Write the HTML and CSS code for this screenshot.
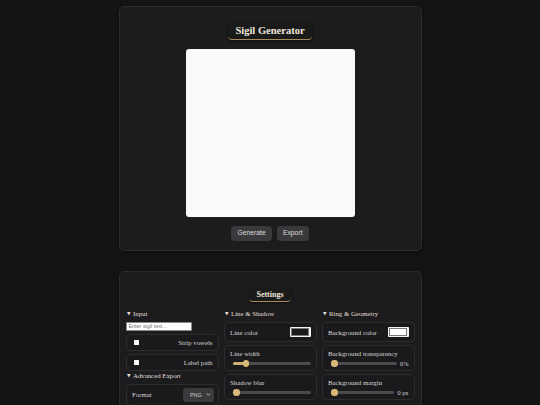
FILE: index.html
```html
<!DOCTYPE html>
<html lang="en">
<head>
<meta charset="utf-8">
<title>Sigil Generator</title>
<link rel="stylesheet" href="styles.css">
</head>
<body>
<main class="page">
  <section class="card gen">
    <h1 class="title">Sigil Generator</h1>
    <div class="canvas"></div>
    <div class="actions">
      <button class="btn">Generate</button>
      <button class="btn">Export</button>
    </div>
  </section>

  <section class="card settings">
    <h2 class="title small">Settings</h2>
    <div class="grid">
      <div class="col">
        <details open class="group">
          <summary>Input</summary>
          <div class="stack">
            <input class="text" type="text" placeholder="Enter sigil text...">
            <label class="row check"><input type="checkbox" class="cb"><span>Strip vowels</span></label>
            <label class="row check"><input type="checkbox" class="cb"><span>Label path</span></label>
          </div>
        </details>
        <details open class="group adv">
          <summary>Advanced Export</summary>
          <div class="stack">
            <div class="row inline fmt">
              <span>Format</span>
              <span class="select-wrap">
                <select class="select"><option>PNG</option><option>SVG</option></select>
                <svg class="chev" viewBox="0 0 10 10"><path d="M2 3.5 L5 6.5 L8 3.5" fill="none" stroke="#ddd" stroke-width="1.6" stroke-linecap="round" stroke-linejoin="round"/></svg>
              </span>
            </div>
          </div>
        </details>
      </div>

      <div class="col">
        <details open class="group">
          <summary>Line &amp; Shadow</summary>
          <div class="stack">
            <div class="row inline">
              <span>Line color</span>
              <span class="swatch"><span class="fill dark"></span></span>
            </div>
            <div class="row slider">
              <span class="lbl">Line width</span>
              <div class="srow"><input type="range" class="range" min="0" max="100" value="14" style="--fill:14%"></div>
            </div>
            <div class="row slider">
              <span class="lbl">Shadow blur</span>
              <div class="srow"><input type="range" class="range" min="0" max="100" value="0" style="--fill:0%"></div>
            </div>
          </div>
        </details>
      </div>

      <div class="col">
        <details open class="group">
          <summary>Ring &amp; Geometry</summary>
          <div class="stack">
            <div class="row inline">
              <span>Background color</span>
              <span class="swatch"><span class="fill light"></span></span>
            </div>
            <div class="row slider">
              <span class="lbl">Background transparency</span>
              <div class="srow"><input type="range" class="range" min="0" max="100" value="0" style="--fill:0%"><span class="val">0%</span></div>
            </div>
            <div class="row slider">
              <span class="lbl">Background margin</span>
              <div class="srow"><input type="range" class="range" min="0" max="100" value="0" style="--fill:0%"><span class="val">0 px</span></div>
            </div>
          </div>
        </details>
      </div>
    </div>
  </section>
</main>
</body>
</html>
```
FILE: styles.css
```css
html {
  scrollbar-width: none;
}
html::-webkit-scrollbar {
  display: none;
}
body {
  margin: 0;
  background: #141414;
  font-family: "Liberation Serif", "Times New Roman", serif;
  color: #d8d8d8;
}
.page {
  width: 303px;
  margin: 0 auto;
  padding: 6px 0 40px;
}
.card {
  background: #1c1c1e;
  border: 1px solid #2b2b2d;
  border-radius: 5px;
  box-shadow: 0 1px 4px rgba(0, 0, 0, 0.4);
  box-sizing: border-box;
  display: flex;
  flex-direction: column;
  align-items: center;
}
.gen {
  padding: 15.5px 0 9px;
}
.settings {
  margin-top: 20.5px;
  padding: 16px 6px 12px;
}
.title {
  margin: 0;
  font-size: 10.5px;
  line-height: 12px;
  font-weight: bold;
  color: #ece6da;
  padding: 2px 7px;
  background: #1a1a1a;
  border-bottom: 1px solid #a78b5c;
  border-radius: 4px;
  box-shadow: 0 1px 3px rgba(0, 0, 0, 0.55);
}
.title.small {
  font-size: 8px;
  line-height: 9px;
  padding: 2px 7px;
}
.canvas {
  margin-top: 9px;
  width: 169px;
  height: 168.5px;
  background: #f9f9f9;
  border-radius: 3px;
}
.actions {
  margin-top: 9px;
  display: flex;
  gap: 4.5px;
}
.btn {
  font-family: "Liberation Sans", Arial, sans-serif;
  font-size: 6.8px;
  color: #dcdcdc;
  background: #3a3a3c;
  border: none;
  border-radius: 4px;
  height: 14.5px;
  padding: 0 6.3px;
  line-height: 14.5px;
}
.grid {
  margin-top: 6.8px;
  width: 100%;
  display: grid;
  grid-template-columns: 1fr 1fr 1fr;
  gap: 5px;
}
.col {
  display: flex;
  flex-direction: column;
  min-width: 0;
}
.group summary {
  list-style: none;
  font-size: 6.8px;
  line-height: 10px;
  color: #e4dfd6;
  margin-bottom: 3px;
  white-space: nowrap;
}
.group summary::-webkit-details-marker {
  display: none;
}
.group summary::before {
  content: "▼";
  font-family: "DejaVu Sans", sans-serif;
  font-size: 4.6px;
  display: inline-block;
  width: 6px;
  margin-left: 1.5px;
  vertical-align: 1px;
}
.group.adv {
  margin-top: 0.5px;
}
.stack {
  display: flex;
  flex-direction: column;
  gap: 3px;
}
.text {
  width: 66.7px;
  height: 9px;
  box-sizing: border-box;
  margin: 0;
  padding: 0 2px;
  border: 0.5px solid #8a8a8a;
  border-radius: 1px;
  background: #ffffff;
  font-family: "Liberation Sans", Arial, sans-serif;
  font-size: 5.4px;
}
.text::placeholder {
  color: #777;
}
.row {
  border: 1px solid #2d2d2f;
  border-radius: 5px;
  background: #1a1a1c;
  font-size: 6.8px;
  color: #d6d6d6;
  box-sizing: border-box;
}
.check {
  height: 17px;
  display: flex;
  align-items: center;
  justify-content: space-between;
  padding: 0 5px 0 7px;
}
.cb {
  -webkit-appearance: none;
  appearance: none;
  margin: 0;
  width: 5px;
  height: 5px;
  background: #fafafa;
  border-radius: 0.5px;
}
.inline {
  display: flex;
  align-items: center;
  justify-content: space-between;
  padding: 4px 5px 4px 5.5px;
  min-height: 20.5px;
}
.fmt {
  padding: 3px 4px 3px 5.5px;
}
.select-wrap {
  position: relative;
  display: inline-flex;
}
.select {
  -webkit-appearance: none;
  appearance: none;
  width: 31px;
  height: 13.3px;
  border: none;
  border-radius: 3px;
  background: #3b3b3d;
  color: #cfcfcf;
  font-family: "Liberation Sans", Arial, sans-serif;
  font-size: 5.4px;
  padding: 0 0 0 7.5px;
}
.chev {
  position: absolute;
  right: 3px;
  top: 4px;
  width: 5px;
  height: 5px;
  pointer-events: none;
}
.swatch {
  width: 21px;
  height: 10.5px;
  box-sizing: border-box;
  padding: 1.5px;
  background: #f2f2f2;
  border-radius: 1px;
  display: flex;
}
.fill {
  flex: 1;
  border: 0.5px solid #7a7a7a;
}
.fill.dark {
  background: #1b1b1b;
}
.fill.light {
  background: #ffffff;
}
.slider {
  padding: 3px 5px 3px 5.5px;
  height: 26px;
}
.lbl {
  display: block;
  line-height: 9px;
  white-space: nowrap;
}
.srow {
  margin-top: 1px;
  height: 8px;
  display: flex;
  align-items: center;
  padding: 0 0 0 3px;
}
.range {
  -webkit-appearance: none;
  appearance: none;
  flex: 1;
  min-width: 0;
  height: 3px;
  margin: 0;
  border-radius: 2px;
  background: linear-gradient(to right, #cfae73 var(--fill), #4b4b4d var(--fill));
}
.range::-webkit-slider-thumb {
  -webkit-appearance: none;
  appearance: none;
  width: 6.5px;
  height: 6.5px;
  border-radius: 50%;
  background: #d8b978;
  border: none;
}
.val {
  font-size: 6.3px;
  margin-left: 3.5px;
  color: #d0d0d0;
  white-space: nowrap;
}
```
